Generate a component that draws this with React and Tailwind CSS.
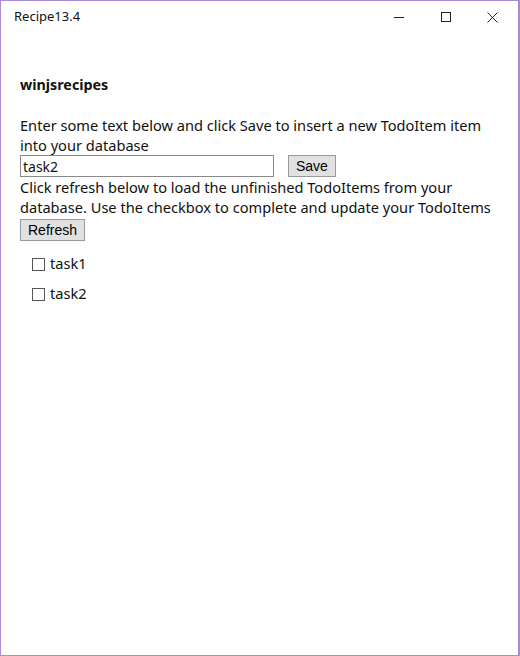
import { useState } from "react";

function TitleBar() {
  return (
    <div className="flex h-[32px] items-center justify-between pl-[13px]">
      <span className="text-[13px] text-[#111] [font-family:'Noto_Sans',sans-serif]">Recipe13.4</span>
      <div className="flex h-full items-center pr-[2px]">
        <div className="flex h-full w-[47px] items-center justify-center">
          <svg width="10" height="10" viewBox="0 0 10 10">
            <path d="M0 5.5h10" stroke="#222" strokeWidth="1" />
          </svg>
        </div>
        <div className="flex h-full w-[47px] items-center justify-center">
          <svg width="10" height="10" viewBox="0 0 10 10">
            <rect x="0.5" y="0.5" width="9" height="9" fill="none" stroke="#222" strokeWidth="1" />
          </svg>
        </div>
        <div className="flex h-full w-[47px] items-center justify-center">
          <svg width="11" height="11" viewBox="0 0 11 11">
            <path d="M0.5 0.5l10 10M10.5 0.5l-10 10" stroke="#222" strokeWidth="1" />
          </svg>
        </div>
      </div>
    </div>
  );
}

export default function App() {
  const [text, setText] = useState("task2");
  const [items, setItems] = useState([
    { id: 1, text: "task1", done: false },
    { id: 2, text: "task2", done: false },
  ]);

  return (
    <div className="h-[656px] w-[520px] border border-r-2 border-[#a98bd2] bg-white">
      <TitleBar />
      <div className="px-[19px] pt-[42px] text-[#111] [font-family:'Noto_Sans',sans-serif]">
        <h1 className="text-[14.3px] font-bold leading-[20px]">winjsrecipes</h1>
        <p className="mt-[20px] text-[14.6px] leading-[20px]">
          Enter some text below and click Save to insert a new TodoItem item into your database
        </p>
        <div className="flex items-center">
          <input
            value={text}
            onChange={(e) => setText(e.target.value)}
            className="h-[22px] w-[254px] border border-[#8a8a8a] px-[2px] text-[14px] outline-none"
          />
          <button className="ml-[14px] h-[22px] border border-[#9a9a9a] bg-[#e1e1e1] px-[7px] text-[14px] leading-[18px] text-black [font-family:'Liberation_Sans',sans-serif]">
            Save
          </button>
        </div>
        <p className="text-[14.6px] leading-[20px]">
          Click refresh below to load the unfinished TodoItems from your database. Use the checkbox to complete and update your TodoItems
        </p>
        <button className="mt-[2px] h-[22px] border border-[#9a9a9a] bg-[#e1e1e1] px-[7px] text-[14px] leading-[18px] text-black [font-family:'Liberation_Sans',sans-serif]">
          Refresh
        </button>
        <ul className="mt-[8px] pl-[12px]">
          {items.map((it) => (
            <li key={it.id} className="flex h-[30px] items-center gap-[5px] text-[14.6px]">
              <input
                type="checkbox"
                checked={it.done}
                onChange={() =>
                  setItems(items.map((x) => (x.id === it.id ? { ...x, done: !x.done } : x)))
                }
                className="h-[13px] w-[13px] appearance-none border border-[#555] bg-white"
              />
              <span>{it.text}</span>
            </li>
          ))}
        </ul>
      </div>
    </div>
  );
}
